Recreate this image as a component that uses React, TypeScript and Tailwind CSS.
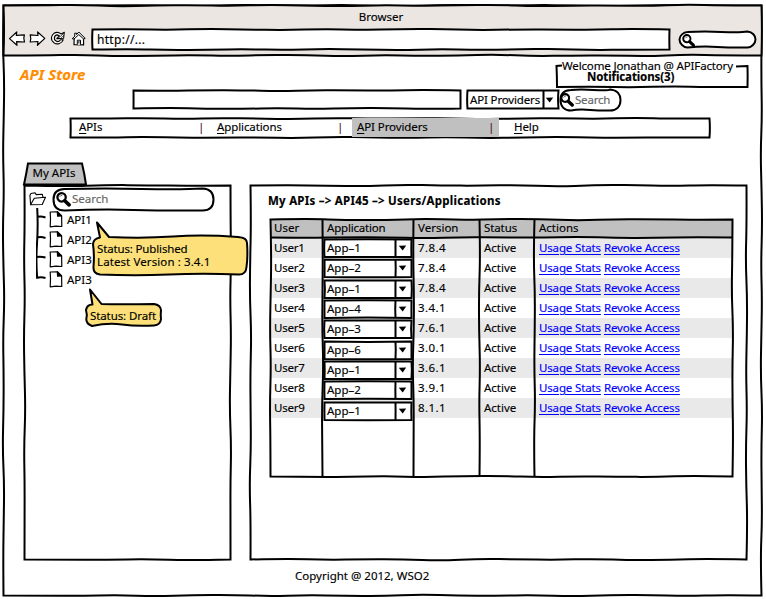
import React from "react";

type Pt = [number, number];

// Hand-drawn line between two points, gently bending around the straight path.
function wobble(a: Pt, b: Pt, seed: number, amp = 0.75): string {
  const dx = b[0] - a[0];
  const dy = b[1] - a[1];
  const len = Math.hypot(dx, dy) || 1;
  const n = Math.max(2, Math.round(len / 38));
  const nx = -dy / len;
  const ny = dx / len;
  const pts: Pt[] = [];
  for (let i = 1; i < n; i++) {
    const t = i / n;
    const o = amp * Math.sin(i * 2.3 + seed * 1.7) + amp * 0.4 * Math.sin(i * 1.1 + seed);
    pts.push([a[0] + dx * t + nx * o, a[1] + dy * t + ny * o]);
  }
  let d = "";
  for (let i = 0; i < pts.length; i++) {
    const p = pts[i];
    const q = i < pts.length - 1 ? pts[i + 1] : b;
    const e = i < pts.length - 1 ? [(p[0] + q[0]) / 2, (p[1] + q[1]) / 2] : b;
    d += `Q${p[0].toFixed(2)} ${p[1].toFixed(2)} ${e[0].toFixed(2)} ${e[1].toFixed(2)}`;
  }
  return d;
}

function polyPath(pts: Pt[], seed: number, amp?: number) {
  let d = `M${pts[0][0]} ${pts[0][1]}`;
  for (let i = 0; i < pts.length; i++) d += wobble(pts[i], pts[(i + 1) % pts.length], seed + i, amp);
  return d + "Z";
}

const line = (a: Pt, b: Pt, seed: number, amp?: number) => `M${a[0]} ${a[1]}` + wobble(a, b, seed, amp);

function Frame({ w, h, fill = "none", seed = 1, amp, extra = "" }: { w: number; h: number; fill?: string; seed?: number; amp?: number; extra?: string }) {
  return (
    <svg className="pointer-events-none absolute left-0 top-0 -z-10 overflow-visible" width={w} height={h} fill="none" stroke="#000" strokeWidth="2">
      <g transform="translate(.5 .5)">
        <path d={polyPath([[0, 0], [w, 0], [w, h], [0, h]], seed, amp)} fill={fill} />
        {extra && <path d={extra} />}
      </g>
    </svg>
  );
}

function Pill({ w, h }: { w: number; h: number }) {
  const r = h / 2;
  const d = `M${r} .6Q${w * 0.3} -.6 ${w * 0.55} .4T${w - r} 0C${w - 3} .5 ${w} ${r * 0.5} ${w} ${r}C${w} ${h - 4} ${w - 4} ${h} ${w - r} ${h}Q${w * 0.7} ${h + 0.4} ${w * 0.5} ${h - 0.6}T${r} ${h}C4 ${h} 0 ${h - 4} 0 ${r}C0 4 4 .8 ${r} .6Z`;
  return (
    <svg className="pointer-events-none absolute left-0 top-0 -z-10 overflow-visible" width={w} height={h}>
      <path d={d} transform="translate(.5 .5)" fill="#fff" stroke="#000" strokeWidth="2" />
    </svg>
  );
}

function Magnifier({ size }: { size: number }) {
  return (
    <svg width={size} height={size} viewBox="0 0 14 14" fill="none" stroke="#000" strokeLinecap="round" className="shrink-0">
      <circle cx="5.2" cy="5" r="3.9" strokeWidth="2.1" />
      <path d="M8.2 8.2L12.2 12" strokeWidth="3.4" />
      <path d="M3.6 4.2Q4.2 3.2 5.4 3.2" strokeWidth=".6" />
    </svg>
  );
}

function Caret() {
  return (
    <svg width="9" height="6" className="shrink-0">
      <path d="M.8 .8L8.2 .4L4.7 5.6Z" fill="#000" />
    </svg>
  );
}

function NavIcons() {
  return (
    <svg width="80" height="20" viewBox="8 29 80 20" fill="#fff" stroke="#000" strokeWidth="1.2" strokeLinejoin="round" className="shrink-0">
      <path d="M9.5 38.6L16.8 32L16.3 35.3L24.4 34.8L23.8 38.2L24.5 42L16.6 41.6L17 45.3Z" />
      <path d="M44.8 38.4L37.6 32L38 35.5L30.2 34.8L30.8 38.5L30.2 42L38 41.5L37.4 45.3Z" />
      <path
        strokeWidth="1.1"
        d="M61.200 34Q57.500 31.200 54 33.300Q50.300 36.500 52 40.500Q54.500 44.800 59 43.700Q62.500 42.300 63.200 39.800L60.600 39.700Q59.500 41.600 57 41.600Q54.200 40.500 54.300 37.800Q55 34.800 57.600 34.900L59.400 35.800L56.800 38.600L63.600 38.300L64.300 32.300Z"
      />
      <path strokeWidth=".7" d="M58.500 38L63.300 33.800M60.800 38L63.800 35.500" />
      <path d="M74.200 37.500L74 44.700L83.600 44.900L83.500 37.500L78.800 33.500Z" />
      <path strokeWidth="1" d="M72.200 38.700L74.800 36.200L74.700 33.200L76.500 33.200L76.600 34.500L78.800 32L85.200 38.400L83.600 39L78.800 34.600L74 39Z" />
      <path strokeWidth="1" d="M77.300 44.700L77.300 40.200L80.500 40.200L80.500 44.700M78.900 41V43.500" />
    </svg>
  );
}

function FolderIcon() {
  return (
    <svg width="18" height="14" viewBox="0 0 18 14" fill="#fff" stroke="#000" strokeWidth="1.1" strokeLinejoin="round">
      <path d="M1.600 12.600L.9 3.200L2 1.500L6 .8L7.200 2.600L13.200 2.200L14 5.200" />
      <path d="M1.500 12.700L5.300 6.200L16.500 5.200L13.200 12.500Z" />
    </svg>
  );
}

function FileIcon() {
  return (
    <svg width="14" height="17" viewBox="0 0 14 17" fill="#fff" stroke="#000" strokeWidth="1.2" strokeLinejoin="round" className="shrink-0">
      <path d="M1.2 1L8.3 .8L12.6 5L12.8 15.5L7 15.2L1.2 15.8L1.5 8Z" />
      <path d="M8.3 .8L8.6 5.2L12.6 5Z" fill="#000" />
    </svg>
  );
}

function Select({ label, w, divider, seed, h = 18 }: { label: string; w: number; divider: number; seed: number; h?: number }) {
  return (
    <div className="relative isolate flex h-full w-full items-center justify-between pl-[3px] pr-[4px]">
      <Frame w={w} h={h} fill="#fff" seed={seed} amp={0.6} extra={line([divider, 0], [divider, h], seed + 2, 0.4)} />
      <span>{label}</span>
      <Caret />
    </div>
  );
}

const menu = [
  { k: "A", rest: "PIs", box: "w-[138px] pl-[5px] pr-[8px]" },
  { k: "A", rest: "pplications", box: "w-[140px] pl-[5px] pr-[9px]" },
  { k: "A", rest: "PI Providers", box: "w-[147px] pl-[5px] pr-[5px] bg-[#c0c0c0]" },
  { k: "H", rest: "elp", box: "w-[120px] pl-[15px]" },
];

const users = [
  ["User1", "App–1", "7.8.4"],
  ["User2", "App–2", "7.8.4"],
  ["User3", "App–1", "7.8.4"],
  ["User4", "App–4", "3.4.1"],
  ["User5", "App–3", "7.6.1"],
  ["User6", "App–6", "3.0.1"],
  ["User7", "App–1", "3.6.1"],
  ["User8", "App–2", "3.9.1"],
  ["User9", "App–1", "8.1.1"],
];

const nodes = ["API1", "API2", "API3", "API3"];

function Header() {
  return (
    <header className="relative isolate h-[51px] w-[758px]">
      <Frame w={758} h={50} fill="#ebe6e1" seed={4} />
      <div className="h-[24px] pr-[2px] pt-[4px] text-center leading-4">Browser</div>
      <div className="flex h-[20px]">
        <div className="w-[89px] pl-[5px]"><NavIcons /></div>
        <div className="relative isolate h-[20px] w-[577px] pl-[5px] leading-[21px]">
          <Frame w={577} h={20} fill="#fff" seed={2} amp={0.6} />
          <span className="text-[12px] tracking-[0.3px]">http://...</span>
        </div>
        <div className="relative isolate ml-[10px] mt-[2px] h-[16px] w-[76px] pl-[3px] pt-[3px]">
          <Pill w={76} h={16} />
          <Magnifier size={13} />
        </div>
      </div>
    </header>
  );
}

function Tree() {
  return (
    <div className="flex w-[220px] flex-col">
      <div className="relative ml-[-1px] h-[22px] w-[64px] pt-[2px] text-center leading-4">
        <svg className="absolute left-0 top-0 -z-10 overflow-visible" width="64" height="22">
          <path d={polyPath([[1, 21.5], [5, 0.5], [59, 0.5], [63, 21.5]], 3, 0.5)} fill="#c0c0c0" stroke="#000" strokeWidth="2" />
        </svg>
        <span className="-ml-[2px]">My APIs</span>
      </div>
      <div className="relative isolate h-[374px] w-[206px]">
        <Frame w={206} h={374} seed={7} />
        <div className="flex">
          <div className="ml-[5px] mt-[7px] w-[24px]"><FolderIcon /></div>
          <div className="relative isolate mt-[3px] flex h-[22px] w-[160px] items-center gap-[2px] pl-[3px] text-[#666]">
            <Pill w={160} h={22} />
            <Magnifier size={15} />
            <span className="-ml-px">Search</span>
          </div>
        </div>
        <div className="relative -mt-px pl-[25px]">
          <svg className="absolute left-[12px] top-[-1px]" width="12" height="76" fill="none" stroke="#000" strokeWidth="2">
            <path d="M1.2 0Q2.2 18 1 36T1.2 70.5M1 9Q5 8 9.500 9.500M1 29.500Q5 28.500 9.500 30M1 49Q5 48.500 9.500 49.500M.2 70Q5 68.500 9.500 70" />
          </svg>
          {nodes.map((n, i) => (
            <div key={i} className="flex h-[20px] items-center gap-[4px]">
              <FileIcon />
              <span className="pt-[2px]">{n}</span>
            </div>
          ))}
        </div>
        <div className="absolute left-[69px] top-[37px] h-[54px] w-[154px] pl-[4px] pt-[20px] leading-[13px]">
          <svg className="absolute left-0 top-0 -z-10 overflow-visible" width="154" height="54" fill="#fde07a" stroke="#000" strokeWidth="2" strokeLinejoin="round">
            <path d="M4 .5L16 15Q50 16.500 80 14.500T145 15Q154 15.500 154 21Q155 34 153.500 45Q153 52.500 146 52.500Q110 51 76 52.500T7 52.500Q0 51.500 .5 45Q1.500 33 0 22Q.5 16.500 7 15.500Z" />
          </svg>
          <div className="tracking-[-0.15px]">Status: Published</div>
          <div className="tracking-[0.1px]">Latest Version : 3.4.1</div>
        </div>
        <div className="absolute left-[62px] top-[104px] h-[38px] w-[76px] pl-[4px] pt-[20px] leading-[13px]">
          <svg className="absolute left-0 top-0 -z-10 overflow-visible" width="76" height="38" fill="#fde07a" stroke="#000" strokeWidth="2" strokeLinejoin="round">
            <path d="M4 .5L15.500 15Q35 15.500 68 15Q74.500 16 75 21Q74.500 26 75 30Q74.500 36 68 36.500Q50 37.500 36 35.500T6 37Q0 34.500 .3 30Q1.500 26 0 21Q1 15.500 6.500 15.500Z" />
          </svg>
          <span className="tracking-[-0.1px]">Status: Draft</span>
        </div>
      </div>
    </div>
  );
}

function UsersTable() {
  const cols = [52, 143, 209, 264];
  return (
    <div className="relative isolate ml-[20px] h-[258px] w-[463px]">
      <div className="flex h-[19px] bg-[#c0c0c0] leading-[18px]">
        <div className="w-[53px] pl-[4px]">User</div>
        <div className="w-[91px] pl-[4px] tracking-[-0.2px]">Application</div>
        <div className="w-[66px] pl-[4px]">Version</div>
        <div className="w-[55px] pl-[4px] tracking-[-0.1px]">Status</div>
        <div className="pl-[4px]">Actions</div>
      </div>
      <div className="flex">
        <div className="w-[463px]">
          {users.map(([u, , v], i) => (
            <div key={u} className={`flex h-[20px] leading-[20px] ${i % 2 ? "" : "bg-[#e9e9e9]"}`}>
              <div className="w-[144px] pl-[4px] tracking-[-0.2px]">{u}</div>
              <div className="w-[66px] pl-[4px] tracking-[0.4px]">{v}</div>
              <div className="w-[55px] pl-[4px]">Active</div>
              <div className="flex gap-[4px] pl-[4px] tracking-[-0.15px] text-[#0000ff]">
                <a className="w-[61px] underline decoration-1 underline-offset-2">Usage Stats</a>
                <a className="underline decoration-1 underline-offset-2">Revoke Access</a>
              </div>
            </div>
          ))}
        </div>
        <div className="-ml-[409px] flex w-[87px] flex-col gap-[2.33px] pt-px">
          {users.map(([u, a], i) => (
            <div key={u} className="h-[18px] leading-[18px]">
              <Select label={a} w={87} divider={71} seed={i + 2} h={17.5} />
            </div>
          ))}
        </div>
      </div>
      <svg className="pointer-events-none absolute left-0 top-0 overflow-visible" width="463" height="258" fill="none" stroke="#000" strokeWidth="2">
        <g transform="translate(.5 .5)">
          <path d={polyPath([[0, 0], [462, 0], [462, 257], [0, 257]], 5)} />
          <path d={line([0, 18], [462, 18], 3, 0.6)} />
          {cols.map((x, i) => (
            <path key={x} d={line([x, 0], [x, 257], i * 2 + 1, 0.7)} />
          ))}
        </g>
      </svg>
    </div>
  );
}

export default function App() {
  return (
    <div className="h-[599px] w-[766px] overflow-hidden bg-white pl-[3px] pt-[5px] font-['Noto_Sans','Open_Sans',sans-serif] text-[11.5px] leading-4 text-black whitespace-nowrap [-webkit-text-stroke:0.15px]">
      <div className="relative isolate h-[590px] w-[758px]">
        <Frame w={758} h={590} seed={9} />
        <Header />
        <div className="flex h-[34px] justify-between pl-[17px] pr-[14px]">
          <h1 className="pt-[8px] text-[15px] font-bold italic leading-5 text-[#ff8c00]">API Store</h1>
          <div className="relative isolate mt-[10px] h-[21px] w-[190px]">
            <svg className="absolute left-0 top-0 -z-10 overflow-visible" width="190" height="21" fill="none" stroke="#000" strokeWidth="2">
              <path d={`M5 -.5L-.5 0${wobble([-0.5, 0], [0, 21], 1, 0.6)}${wobble([0, 21], [190.5, 21], 2, 0.7)}${wobble([190.5, 21], [190.5, 0], 3, 0.5)}L179 .5`} />
            </svg>
            <div className="-mt-[7px] pl-[5px] leading-[13px] tracking-[-0.15px]">Welcome Jonathan @ APIFactory</div>
            <div className="-mt-[2px] pl-[30px] font-bold leading-[13px] tracking-[-0.1px]">Notifications(3)</div>
          </div>
        </div>
        <div className="flex h-[28px] pl-[130px]">
          <div className="relative isolate h-[19px] w-[327px]"><Frame w={327} h={18} seed={3} amp={0.6} /></div>
          <div className="ml-[7px] h-[19px] w-[91px] tracking-[-0.15px]"><Select label="API Providers" w={91} divider={76} seed={6} /></div>
          <div className="relative isolate -mt-px ml-[2px] flex h-[21px] w-[60px] items-center gap-[2px] pl-0 text-[#666]">
            <Pill w={60} h={21} />
            <Magnifier size={14} />
            <span className="-ml-px tracking-[-0.2px]">Search</span>
          </div>
        </div>
        <nav className="relative isolate ml-[67px] flex h-[19px] w-[639px] pl-[4px]">
          <Frame w={639} h={19} seed={8} amp={0.6} />
          {menu.map((m, i) => (
            <div key={i} className={`flex justify-between leading-[18px] ${m.box}`}>
              <span className="tracking-[-0.1px]"><span className="underline underline-offset-2">{m.k}</span>{m.rest}</span>
              {i < 3 && <span className="text-[10px] text-[#401010]">|</span>}
            </div>
          ))}
        </nav>
        <div className="mt-[26px] flex pl-[21px]">
          <Tree />
          <main className="relative isolate ml-[6px] mt-[22px] h-[374px] w-[496px]">
            <Frame w={496} h={374} seed={12} />
            <h2 className="h-[34px] pl-[18px] pt-[8px] font-bold tracking-[0.25px]">My APIs –&gt; API45 –&gt; Users/Applications</h2>
            <UsersTable />
          </main>
        </div>
        <footer className="pl-[292px] pt-[9px]">Copyright @ 2012, WSO2</footer>
      </div>
    </div>
  );
}
